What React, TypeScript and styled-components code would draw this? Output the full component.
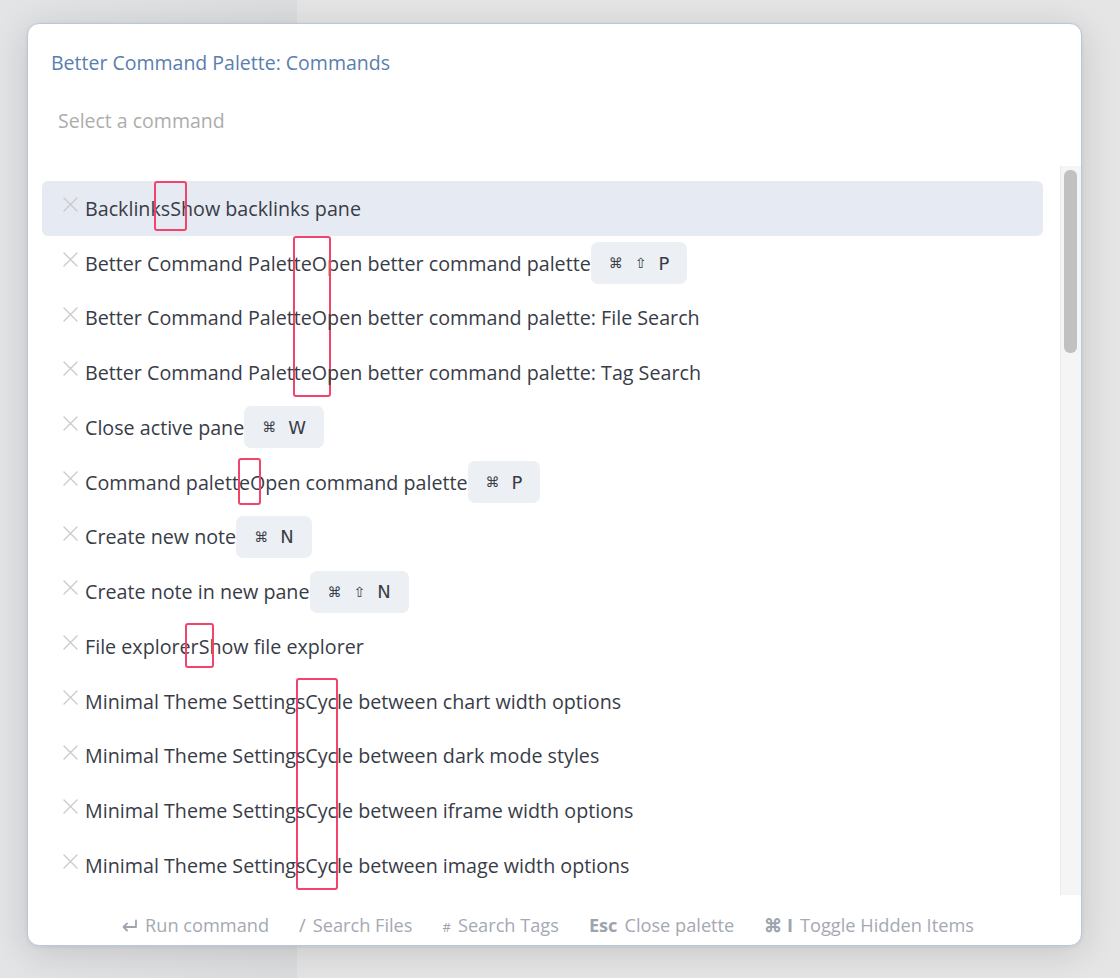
import React from "react";
import styled, { createGlobalStyle } from "styled-components";

const Global = createGlobalStyle`
  html, body { margin: 0; padding: 0; }
  body {
    width: 1120px;
    height: 978px;
    overflow: hidden;
    font-family: "Open Sans", "Noto Sans", sans-serif;
  }
`;

const Page = styled.div`
  position: relative;
  display: flex;
  width: 1120px;
  height: 978px;
`;

const Sidebar = styled.div`
  width: 297px;
  background: linear-gradient(90deg, #e3e4e6 0%, #dcdddf 100%);
`;

const Main = styled.div`
  flex: 1;
  background: #e5e5e5;
`;

const Modal = styled.div`
  position: absolute;
  top: 23px;
  left: 27px;
  width: 1055px;
  height: 923px;
  box-sizing: border-box;
  border: 1px solid #b9c7db;
  border-radius: 12px;
  background: #ffffff;
  box-shadow: 0 6px 36px rgba(0, 0, 0, 0.14), 0 1px 4px rgba(0, 0, 0, 0.06);
  display: flex;
  flex-direction: column;
  overflow: hidden;
`;

const Title = styled.div`
  padding: 27px 24px 0 23px;
  font-size: 19.5px;
  line-height: 24px;
  color: #5a7eae;
`;

const SearchInput = styled.input`
  margin-top: 25px;
  height: 40px;
  padding: 0 0 0 30px;
  border: none;
  outline: none;
  background: transparent;
  font-family: inherit;
  font-size: 19.5px;
  color: #383c47;
  &::placeholder {
    color: #adadad;
  }
`;

const Body = styled.div`
  margin-top: 26px;
  height: 729px;
  display: flex;
`;

const List = styled.div`
  flex: 1;
  padding: 15px 17px 0 14px;
  overflow: hidden;
`;

const Row = styled.div<{ $selected?: boolean }>`
  position: relative;
  height: 54.75px;
  box-sizing: border-box;
  display: flex;
  align-items: center;
  padding-left: 21px;
  border-radius: 6px;
  background: ${(p) => (p.$selected ? "#e6eaf2" : "transparent")};
  font-size: 19.7px;
  color: #383c47;
  white-space: nowrap;
`;

const XIcon = styled.svg`
  align-self: flex-start;
  margin-top: 16px;
  margin-right: 7px;
  width: 15px;
  height: 15px;
  flex: none;
`;

const Name = styled.span``;
const Desc = styled.span``;

const Marker = styled.span`
  position: relative;
  align-self: stretch;
  width: 0;
`;

const Mark = styled.span`
  position: absolute;
  box-sizing: border-box;
  border: 2px solid #f2436c;
  border-radius: 3px;
`;

const Kbd = styled.span`
  display: inline-flex;
  align-items: center;
  gap: 12px;
  height: 42px;
  padding: 0 18px;
  border-radius: 7px;
  background: #eceff4;
  color: #383c47;
`;

const Key = styled.span<{ $small?: boolean }>`
  font-family: "DejaVu Sans", "Open Sans", sans-serif;
  font-size: ${(p) => (p.$small ? "14px" : "18px")};
`;

const Track = styled.div`
  width: 21px;
  box-sizing: border-box;
  background: #f5f5f5;
  border-left: 1px solid #ebebeb;
  padding: 4px 4px 0 3px;
`;

const Thumb = styled.div`
  height: 183px;
  border-radius: 6px;
  background: #c1c1c1;
`;

const Footer = styled.div`
  flex: 1;
  display: flex;
  align-items: center;
  justify-content: center;
  gap: 30px;
  padding: 9px 14px 0 0;
  font-size: 18.2px;
  color: #a4a9b3;
`;

const Hint = styled.span`
  display: inline-flex;
  align-items: baseline;
  gap: 7px;
  white-space: nowrap;
`;

const HintKey = styled.span<{ $bold?: boolean; $size?: number }>`
  font-weight: ${(p) => (p.$bold ? 700 : 400)};
  font-size: ${(p) => (p.$size ? `${p.$size}px` : "inherit")};
  color: #9ea4ae;
`;

const EnterIcon = styled.svg`
  width: 17px;
  height: 13px;
  align-self: center;
  margin-top: 1px;
`;

type Item = {
  name: string;
  desc?: string;
  keys?: string[];
  mark?: { left: number; width: number; top: number; height: number };
};

const items: Item[] = [
  { name: "Backlinks", desc: "Show backlinks pane", mark: { left: -16, width: 33, top: 0, height: 50 } },
  {
    name: "Better Command Palette",
    desc: "Open better command palette",
    keys: ["⌘", "⇧", "P"],
    mark: { left: -19, width: 38, top: 0, height: 161 },
  },
  { name: "Better Command Palette", desc: "Open better command palette: File Search" },
  { name: "Better Command Palette", desc: "Open better command palette: Tag Search" },
  { name: "Close active pane", keys: ["⌘", "W"] },
  {
    name: "Command palette",
    desc: "Open command palette",
    keys: ["⌘", "P"],
    mark: { left: -12, width: 23, top: 3, height: 47 },
  },
  { name: "Create new note", keys: ["⌘", "N"] },
  { name: "Create note in new pane", keys: ["⌘", "⇧", "N"] },
  { name: "File explorer", desc: "Show file explorer", mark: { left: -14, width: 29, top: 4, height: 45 } },
  {
    name: "Minimal Theme Settings",
    desc: "Cycle between chart width options",
    mark: { left: -9, width: 42, top: 4, height: 212 },
  },
  { name: "Minimal Theme Settings", desc: "Cycle between dark mode styles" },
  { name: "Minimal Theme Settings", desc: "Cycle between iframe width options" },
  { name: "Minimal Theme Settings", desc: "Cycle between image width options" },
];

const Close = () => (
  <XIcon viewBox="0 0 15 15" fill="none">
    <path d="M1 1L14 14M14 1L1 14" stroke="#cbcbcb" strokeWidth="1.4" strokeLinecap="round" />
  </XIcon>
);

export default function App() {
  return (
    <>
      <Global />
      <Page>
        <Sidebar />
        <Main />
        <Modal>
          <Title>Better Command Palette: Commands</Title>
          <SearchInput placeholder="Select a command" />
          <Body>
            <List>
              {items.map((it, i) => (
                <Row key={i} $selected={i === 0}>
                  <Close />
                  <Name>{it.name}</Name>
                  {it.mark && (
                    <Marker>
                      <Mark
                        style={{
                          left: it.mark.left,
                          width: it.mark.width,
                          top: it.mark.top,
                          height: it.mark.height,
                        }}
                      />
                    </Marker>
                  )}
                  {it.desc && <Desc>{it.desc}</Desc>}
                  {it.keys && (
                    <Kbd>
                      {it.keys.map((k, j) => (
                        <Key key={j} $small={k === "⌘" || k === "⇧"}>
                          {k}
                        </Key>
                      ))}
                    </Kbd>
                  )}
                </Row>
              ))}
            </List>
            <Track>
              <Thumb />
            </Track>
          </Body>
          <Footer>
            <Hint>
              <EnterIcon viewBox="0 0 17 13" fill="none">
                <path
                  d="M15 1.5V8H2.5M6 4.5L2.5 8L6 11.5"
                  stroke="#9ea4ae"
                  strokeWidth="1.8"
                  strokeLinecap="round"
                  strokeLinejoin="round"
                />
              </EnterIcon>
              Run command
            </Hint>
            <Hint>
              <HintKey>/</HintKey>
              Search Files
            </Hint>
            <Hint>
              <HintKey $size={13}>#</HintKey>
              Search Tags
            </Hint>
            <Hint>
              <HintKey $bold>Esc</HintKey>
              Close palette
            </Hint>
            <Hint>
              <HintKey $bold>⌘ I</HintKey>
              Toggle Hidden Items
            </Hint>
          </Footer>
        </Modal>
      </Page>
    </>
  );
}
